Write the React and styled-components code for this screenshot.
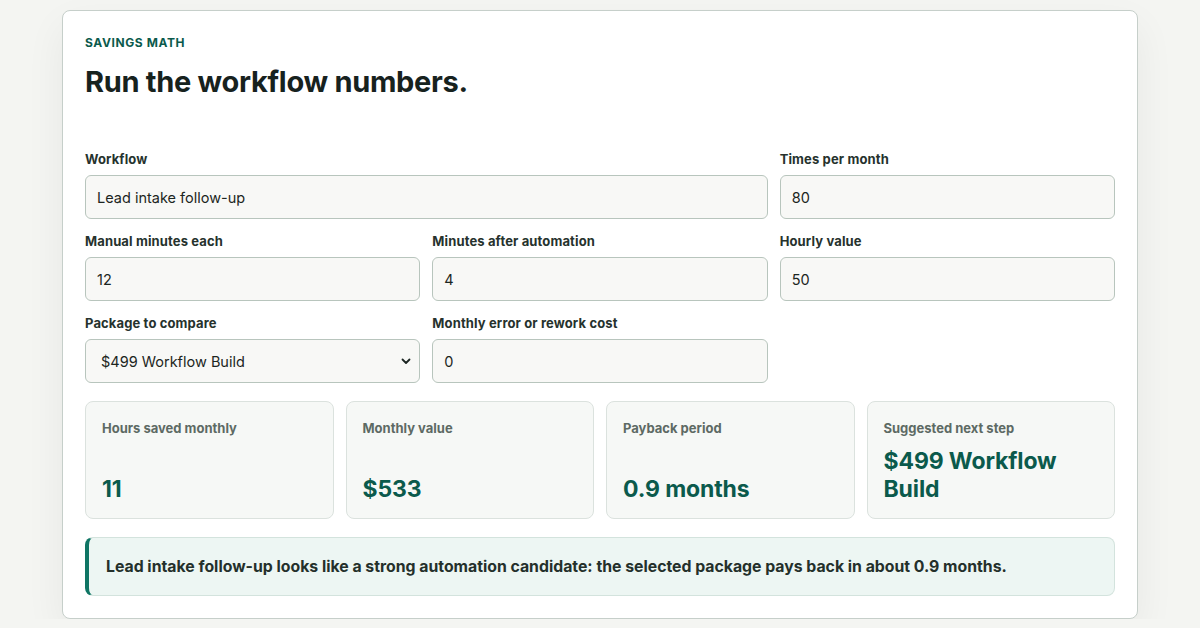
import React from 'react';
import styled, { createGlobalStyle } from 'styled-components';

const GlobalStyle = createGlobalStyle`
  html, body {
    margin: 0;
    background: #f4f5f2;
    font-family: Inter, "Noto Sans", "Liberation Sans", sans-serif;
    color: #17221e;
  }
  * { box-sizing: border-box; }
`;

const Card = styled.section`
  width: 1076px;
  margin: 10px auto 0;
  padding: 24px 22px 22px;
  background: #ffffff;
  border: 1px solid #c6cfca;
  border-radius: 8px;
  box-shadow: 0 16px 40px rgba(20, 40, 30, 0.06);
`;

const Eyebrow = styled.div`
  font-size: 12px;
  line-height: 16px;
  font-weight: 700;
  letter-spacing: 0.05em;
  text-transform: uppercase;
  color: #0b5a4c;
`;

const Heading = styled.h2`
  margin: 14px 0 0;
  font-size: 29px;
  line-height: 34px;
  font-weight: 700;
  letter-spacing: -0.01em;
  color: #17221e;
`;

const FormGrid = styled.div`
  margin-top: 51px;
  display: grid;
  grid-template-columns: repeat(3, 1fr);
  column-gap: 12px;
  row-gap: 13px;
`;

const Field = styled.label`
  display: flex;
  flex-direction: column;
  gap: 7px;
  grid-column: span ${(p) => p.span || 1};
`;

const Label = styled.span`
  font-size: 13px;
  line-height: 18px;
  font-weight: 700;
  letter-spacing: 0.01em;
  color: #26322d;
`;

const TextInput = styled.input`
  height: 44px;
  width: 100%;
  padding: 0 11px;
  border: 1px solid #b8c5bd;
  border-radius: 6px;
  background: #f8f8f6;
  font-family: inherit;
  font-size: 14.5px;
  color: #1c2622;
  outline: none;
`;

const SelectWrap = styled.div`
  position: relative;
`;

const Select = styled.select`
  appearance: none;
  height: 44px;
  width: 100%;
  padding: 0 32px 0 15px;
  border: 1px solid #b8c5bd;
  border-radius: 6px;
  background: #f8f8f6;
  font-family: inherit;
  font-size: 14.5px;
  color: #1c2622;
  outline: none;
`;

const Chevron = styled.svg`
  position: absolute;
  right: 8px;
  top: 50%;
  transform: translateY(-50%);
  pointer-events: none;
`;

const Stats = styled.div`
  margin-top: 18px;
  display: grid;
  grid-template-columns: repeat(4, 1fr);
  gap: 12px;
`;

const Stat = styled.div`
  display: flex;
  flex-direction: column;
  justify-content: space-between;
  gap: 8px;
  padding: 17px 16px 15px;
  min-height: 118px;
  background: #f6f8f6;
  border: 1px solid #dbe2de;
  border-radius: 8px;
`;

const StatLabel = styled.div`
  font-size: 13px;
  line-height: 18px;
  font-weight: 700;
  color: #5d6a64;
`;

const StatValue = styled.div`
  font-size: 23px;
  line-height: 28px;
  font-weight: 700;
  letter-spacing: -0.005em;
  color: #0b5a4c;
`;

const Callout = styled.div`
  margin-top: 18px;
  padding: 17px 17px 16px;
  background: #edf6f3;
  border: 1px solid #d3e3dd;
  border-left: 4px solid #0f7564;
  border-radius: 8px;
  font-size: 15.8px;
  line-height: 24px;
  font-weight: 700;
  color: #24302b;
`;

const stats = [
  { label: 'Hours saved monthly', value: '11' },
  { label: 'Monthly value', value: '$533' },
  { label: 'Payback period', value: '0.9 months' },
  { label: 'Suggested next step', value: '$499 Workflow Build' },
];

export default function App() {
  return (
    <>
      <GlobalStyle />
      <Card>
        <Eyebrow>Savings math</Eyebrow>
        <Heading>Run the workflow numbers.</Heading>
        <FormGrid>
          <Field span={2}>
            <Label>Workflow</Label>
            <TextInput defaultValue="Lead intake follow-up" />
          </Field>
          <Field>
            <Label>Times per month</Label>
            <TextInput defaultValue="80" />
          </Field>
          <Field>
            <Label>Manual minutes each</Label>
            <TextInput defaultValue="12" />
          </Field>
          <Field>
            <Label>Minutes after automation</Label>
            <TextInput defaultValue="4" />
          </Field>
          <Field>
            <Label>Hourly value</Label>
            <TextInput defaultValue="50" />
          </Field>
          <Field>
            <Label>Package to compare</Label>
            <SelectWrap>
              <Select defaultValue="499">
                <option value="499">$499 Workflow Build</option>
                <option value="999">$999 Systems Sprint</option>
              </Select>
              <Chevron width="12" height="12" viewBox="0 0 12 12">
                <path d="M2.5 4.5 6 8l3.5-3.5" fill="none" stroke="#1c2622" strokeWidth="1.8" strokeLinecap="round" strokeLinejoin="round" />
              </Chevron>
            </SelectWrap>
          </Field>
          <Field>
            <Label>Monthly error or rework cost</Label>
            <TextInput defaultValue="0" />
          </Field>
        </FormGrid>
        <Stats>
          {stats.map((s) => (
            <Stat key={s.label}>
              <StatLabel>{s.label}</StatLabel>
              <StatValue>{s.value}</StatValue>
            </Stat>
          ))}
        </Stats>
        <Callout>
          Lead intake follow-up looks like a strong automation candidate: the selected package pays back in about 0.9 months.
        </Callout>
      </Card>
    </>
  );
}
